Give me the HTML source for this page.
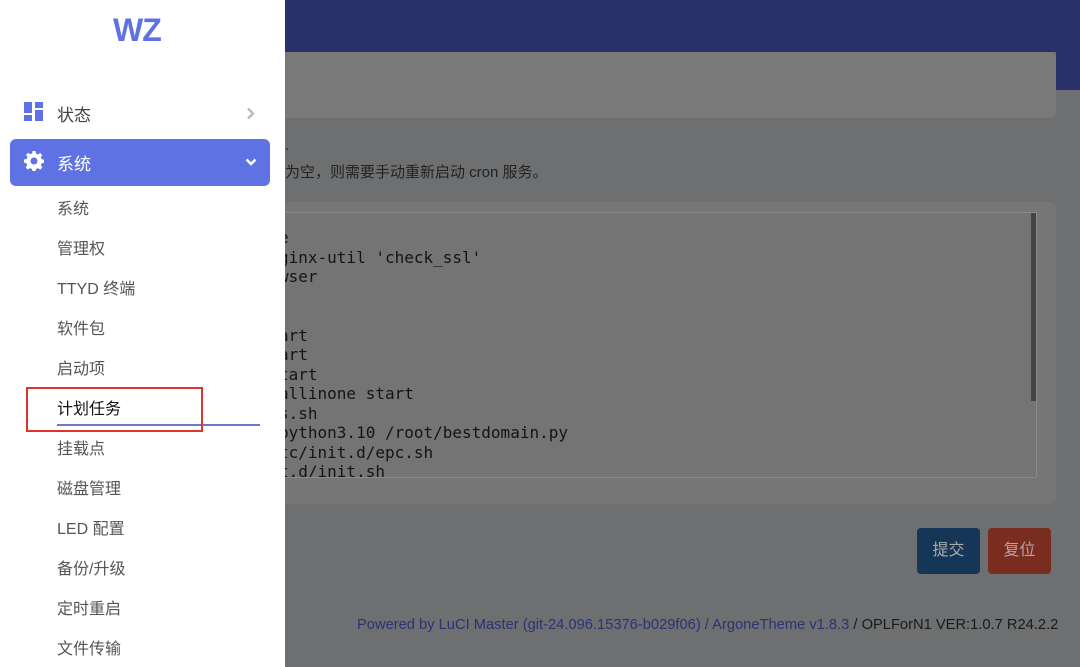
<!DOCTYPE html>
<html><head><meta charset="utf-8"><style>
*{margin:0;padding:0;box-sizing:border-box}
body{width:1080px;height:667px;overflow:hidden;background:#6e6f70;font-family:"Liberation Sans","Noto Sans CJK SC",sans-serif;position:relative}
.hdr{position:absolute;left:0;top:0;width:1080px;height:52px;background:#2a3169}
.hdr2{position:absolute;left:1056px;top:52px;width:24px;height:38px;background:#2a3169}
.card1{position:absolute;left:270px;top:52px;width:786px;height:66px;background:#797979;border-radius:6px}
.desc{position:absolute;left:285px;color:#222;font-size:15px}
.card2{position:absolute;left:270px;top:202px;width:786px;height:302px;background:#767676;border-radius:6px}
.ta{position:absolute;left:240px;top:212px;width:797px;height:266px;border:1px solid #8a8a8a;background:#747474;overflow:hidden}
.sb{position:absolute;left:1031px;top:213px;width:5px;height:188px;background:#444}
pre{position:absolute;left:38px;top:15px;font-family:"DejaVu Sans Mono","Liberation Mono",monospace;font-size:16px;line-height:19.5px;color:#141414}
.btn{position:absolute;top:528px;width:63px;height:46px;border-radius:4px;color:#aaa;font-size:16px;text-align:center;line-height:46px}
.foot{position:absolute;left:357px;top:617px;font-size:14.7px;color:#1a1a1a;white-space:nowrap}
.foot span{color:#2c3275}
.side{position:absolute;left:0;top:0;width:285px;height:667px;background:#fff}
.logo{position:absolute;left:113px;top:12px;font-size:32px;font-weight:bold;color:#5e72e4;letter-spacing:-1px}
.m{position:absolute;left:57px;font-size:16px;color:#555}
.act{position:absolute;left:10px;top:139px;width:260px;height:47px;background:#5e72e4;border-radius:6px}
</style></head><body>
<div class="hdr"></div><div class="hdr2"></div>
<div class="card1"></div>
<div class="desc" style="top:137px">.</div>
<div class="desc" style="top:161px">为空，则需要手动重新启动 cron 服务。</div>
<div class="card2"></div>
<div class="ta"><pre>e
ginx-util 'check_ssl'
wser


art
art
tart
allinone start
s.sh
python3.10 /root/bestdomain.py
tc/init.d/epc.sh
t.d/init.sh</pre></div>
<div class="sb"></div>
<div class="btn" style="left:917px;background:#163657">提交</div>
<div class="btn" style="left:988px;background:#7a2c1f">复位</div>
<div class="foot"><span>Powered by LuCI Master (git-24.096.15376-b029f06) / ArgoneTheme v1.8.3</span> / OPLForN1 VER:1.0.7 R24.2.2</div>

<div class="side">
<div class="logo">WZ</div>
<svg style="position:absolute;left:24px;top:102px" width="20" height="20"><rect x="0" y="0" width="8" height="11" fill="#5e72e4"/><rect x="11" y="0" width="8" height="6" fill="#5e72e4"/><rect x="11" y="8" width="8" height="11" fill="#5e72e4"/><rect x="0" y="13" width="8" height="6" fill="#5e72e4"/></svg>
<div class="m" style="top:101px;font-size:17px;color:#444">状态</div>
<svg style="position:absolute;left:246px;top:107px" width="9" height="13"><path d="M2 1.5l5 5-5 5" stroke="#bbb" stroke-width="2.5" fill="none"/></svg>
<div class="act"></div>
<svg style="position:absolute;left:24px;top:151px" width="20" height="20" viewBox="0 0 20 20"><path fill="#fff" d="M8.5 0h3l.5 2.6 2 .9 2.2-1.5 2.1 2.1-1.5 2.2.9 2 2.6.5v3l-2.6.5-.9 2 1.5 2.2-2.1 2.1-2.2-1.5-2 .9-.5 2.6h-3l-.5-2.6-2-.9-2.2 1.5-2.1-2.1 1.5-2.2-.9-2L0 11.5v-3l2.6-.5.9-2L2 3.8 4.1 1.7 6.3 3.2l2-.9zM10 6.5a3.5 3.5 0 100 7 3.5 3.5 0 000-7z"/></svg>
<div class="m" style="top:150px;font-size:17px;color:#fff">系统</div>
<svg style="position:absolute;left:245px;top:158px" width="12" height="9"><path d="M1.5 1.5l4.5 4.5 4.5-4.5" stroke="#fff" stroke-width="2.5" fill="none"/></svg>
<div class="m" style="top:195px">系统</div>
<div class="m" style="top:235px">管理权</div>
<div class="m" style="top:275px">TTYD 终端</div>
<div class="m" style="top:315px">软件包</div>
<div class="m" style="top:355px">启动项</div>
<div class="m" style="top:395px;color:#111">计划任务</div>
<div style="position:absolute;left:57px;top:424px;width:203px;height:2px;background:#6e7bc4"></div>
<div style="position:absolute;left:26px;top:387px;width:177px;height:45px;border:2px solid #e0332a"></div>
<div class="m" style="top:435px">挂载点</div>
<div class="m" style="top:475px">磁盘管理</div>
<div class="m" style="top:515px">LED 配置</div>
<div class="m" style="top:555px">备份/升级</div>
<div class="m" style="top:595px">定时重启</div>
<div class="m" style="top:635px">文件传输</div>
</div>
</body></html>
